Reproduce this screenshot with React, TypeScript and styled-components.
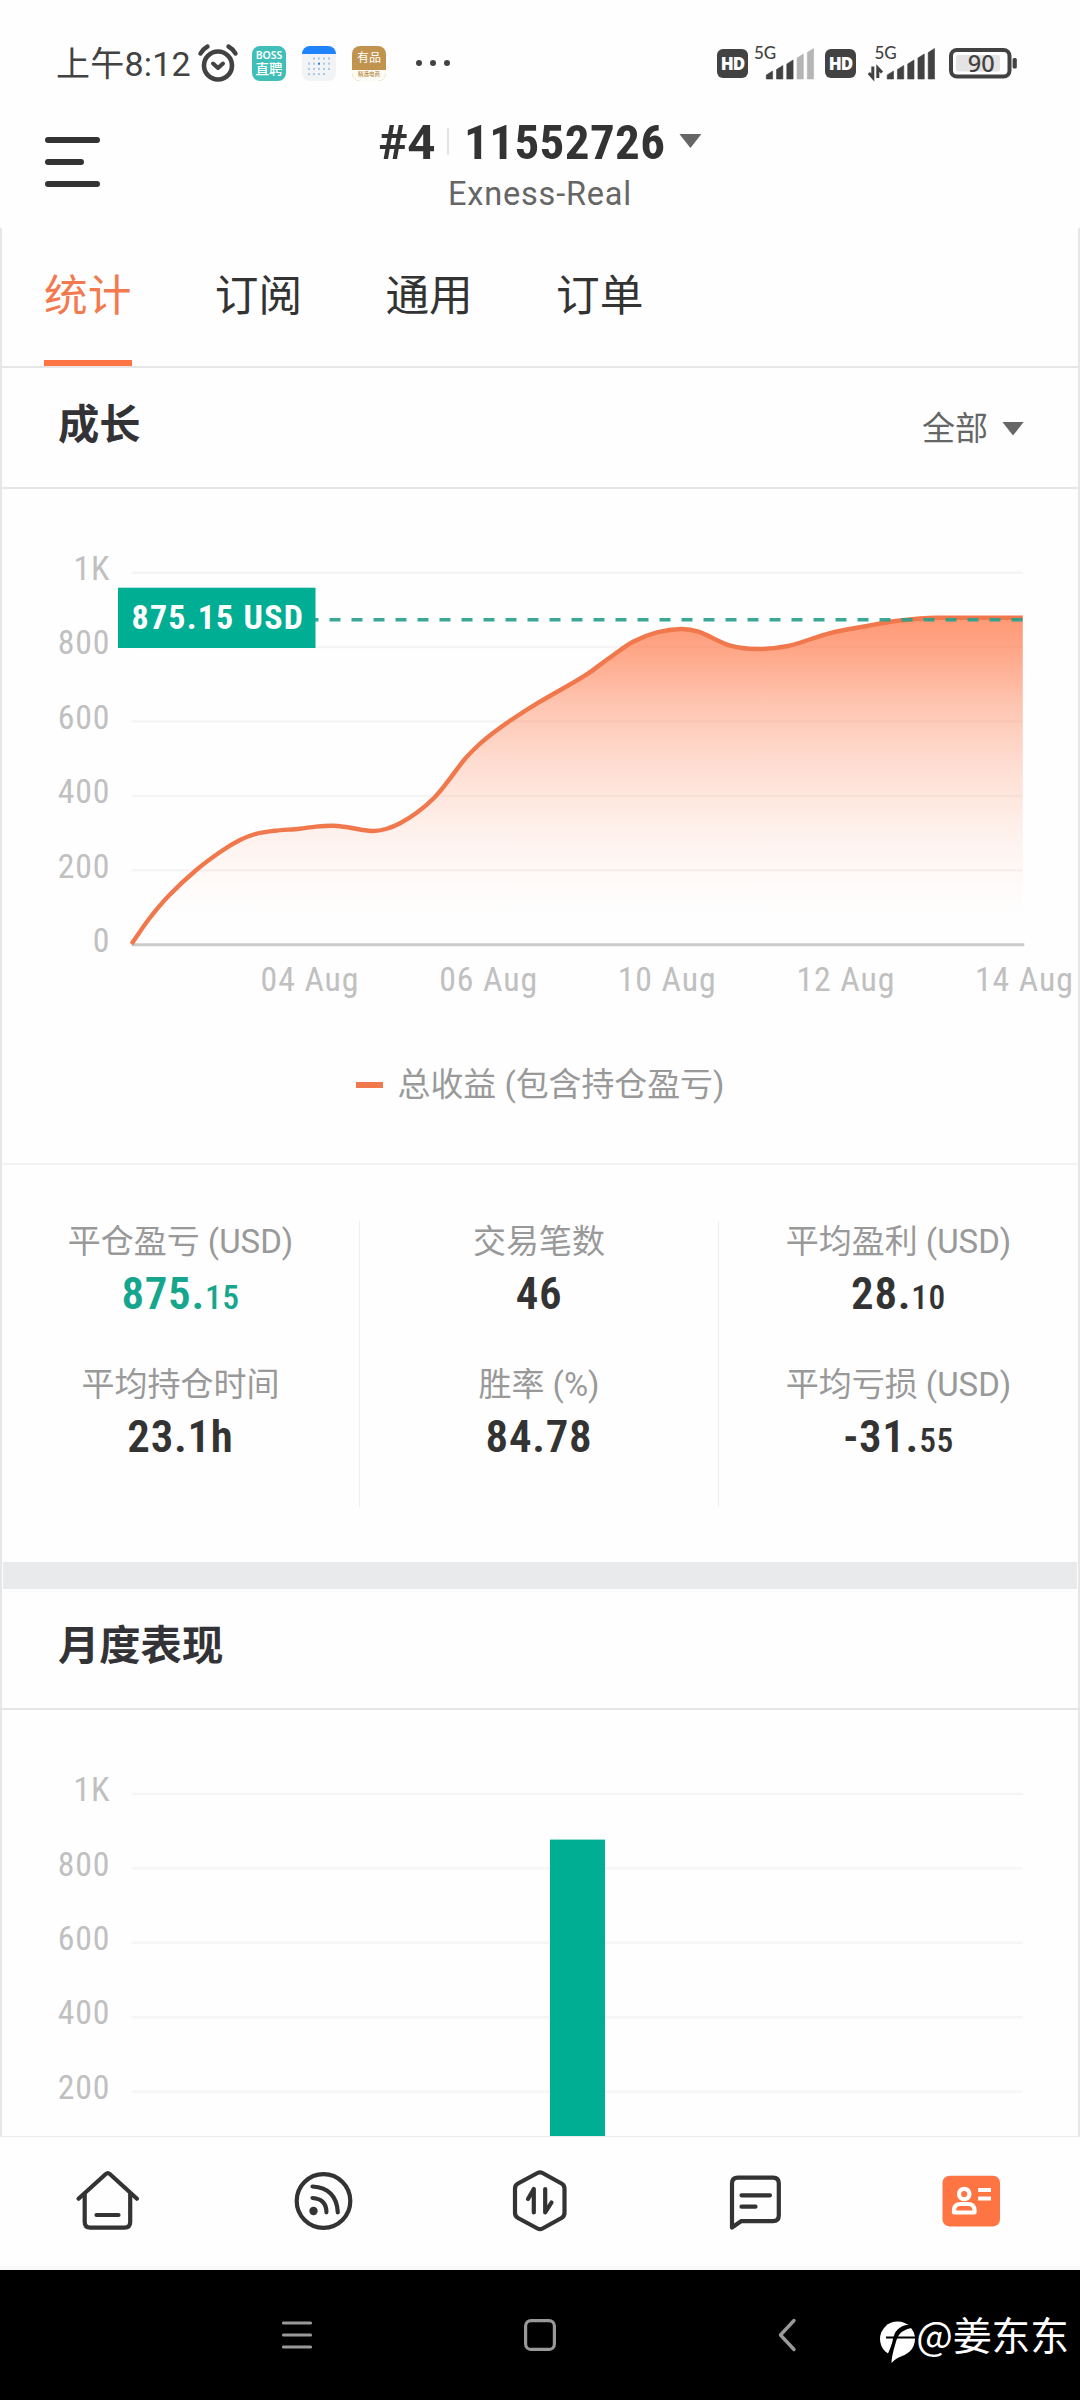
import React from "react";
import styled, { createGlobalStyle, css } from "styled-components";

const FONT = '"Roboto Condensed", Roboto, "Noto Sans CJK SC", sans-serif';
const LABEL_FONT = 'Roboto, "Noto Sans CJK SC", sans-serif';
const INK = "#333333";
const STATUS_INK = "#424242";
const ACCENT = "#ff7443";
const GREEN = "#00ae94";

const GlobalStyle = createGlobalStyle`
  * { box-sizing: border-box; }
  body { margin: 0; background: #fff; }
`;

const Screen = styled.div`
  width: 1080px;
  height: 2400px;
  overflow: hidden;
  display: flex;
  flex-direction: column;
  background: #fefefe;
  color: ${INK};
  font-family: ${FONT};
`;

/* ---------- status bar ---------- */

const StatusBar = styled.div`
  flex: none;
  height: 84px;
  padding: 42px 63px 0 56px;
  display: flex;
  justify-content: space-between;
  color: ${STATUS_INK};
`;

const StatusGroup = styled.div`
  display: flex;
  height: 42px;
  align-items: center;
`;

const Clock = styled.span`
  width: 142px;
  white-space: nowrap;
  font: 400 34px/42px Roboto, "Noto Sans CJK SC", sans-serif;
  letter-spacing: 0.2px;
  padding-top: 1px;
`;

const AppBadge = styled.div<{ $bg: string; $ml: number }>`
  width: 34px;
  height: 35px;
  margin-left: ${(p) => p.$ml}px;
  border-radius: 8px;
  overflow: hidden;
  background: ${(p) => p.$bg};
  color: #fff;
  display: flex;
  flex-direction: column;
  align-items: center;
`;

const BadgeText = styled.span<{ $size: number; $lh: number; $color?: string; $weight?: number }>`
  font: ${(p) => p.$weight ?? 500} ${(p) => p.$size}px/${(p) => p.$lh}px "Noto Sans", "Noto Sans CJK SC", sans-serif;
  color: ${(p) => p.$color ?? "#fff"};
  white-space: nowrap;
`;

const BadgeFoot = styled.div`
  width: 34px;
  flex: 1;
  background: #fdfbf6;
  display: flex;
  justify-content: center;
  overflow: hidden;
`;

const MoreDots = styled.div`
  display: flex;
  gap: 8px;
  margin-left: 30px;
  i {
    width: 6px;
    height: 6px;
    border-radius: 3px;
    background: ${STATUS_INK};
  }
`;

const HdBadge = styled.span<{ $ml?: number }>`
  width: 31px;
  height: 29px;
  margin-left: ${(p) => p.$ml ?? 0}px;
  border-radius: 6px;
  background: ${STATUS_INK};
  color: #fff;
  text-align: center;
  font: 800 17px/29px "Open Sans", sans-serif;
  letter-spacing: -0.9px;
`;

const Drawing = styled.svg<{ $ml?: number; $mt?: number }>`
  display: block;
  flex: none;
  overflow: visible;
  margin-left: ${(p) => p.$ml ?? 0}px;
  margin-top: ${(p) => p.$mt ?? 0}px;
`;

/* ---------- header ---------- */

const Header = styled.header`
  flex: none;
  height: 144px;
  display: grid;
  grid-template-columns: 200px 1fr 200px;
`;

const MenuButton = styled.button`
  width: 55px;
  height: 50px;
  margin: 53px 0 0 45px;
  padding: 0;
  border: 0;
  background: none;
  display: flex;
  flex-direction: column;
  justify-content: space-between;
`;

const MenuLine = styled.span<{ $w: number }>`
  width: ${(p) => p.$w}px;
  height: 6px;
  border-radius: 3px;
  background: ${INK};
`;

const Account = styled.div`
  display: flex;
  flex-direction: column;
  align-items: center;
`;

const AccountLine = styled.div`
  height: 58px;
  margin-top: 30px;
  display: flex;
  align-items: center;
  font-size: 49px;
  line-height: 58px;
  font-weight: 700;
  letter-spacing: 0.4px;
  color: ${INK};
`;

const AccountIndex = styled.span`
  font-family: ${LABEL_FONT};
  letter-spacing: -0.3px;
`;

const Separator = styled.span`
  width: 2px;
  height: 27px;
  margin: 0 15px 4px 12px;
  background: #e4e4e4;
`;

const Server = styled.div`
  margin-top: 2px;
  font-family: ${LABEL_FONT};
  font-size: 32.5px;
  line-height: 40px;
  letter-spacing: 0.8px;
  color: #666;
`;

const Triangle = styled.span<{ $ml: number; $mb?: number }>`
  width: 22px;
  height: 14px;
  margin: 0 0 ${(p) => p.$mb ?? 0}px ${(p) => p.$ml}px;
  background: #666;
  clip-path: polygon(0 0, 100% 0, 50% 100%);
`;

/* ---------- page ---------- */

const Page = styled.main`
  flex: none;
  height: 1908px;
  border: solid #e6e6e6;
  border-width: 0 2px;
  display: flex;
  flex-direction: column;
  overflow: hidden;
`;

const Tabs = styled.nav`
  flex: none;
  height: 140px;
  padding-left: 42px;
  display: flex;
  gap: 82.7px;
  border-bottom: 2px solid #e6e6e6;
`;

const Tab = styled.a<{ $active?: boolean }>`
  width: 88px;
  height: 138px;
  font-size: 43.7px;
  line-height: 137px;
  color: ${INK};
  ${(p) =>
    p.$active &&
    css`
      color: #f37a4e;
      border-bottom: 6px solid ${ACCENT};
    `}
`;

const SectionHead = styled.div`
  flex: none;
  height: 121px;
  padding: 0 54px 5px 56px;
  display: flex;
  align-items: center;
  justify-content: space-between;
  border-bottom: 2px solid #e6e6e6;
`;

const SectionTitle = styled.h2`
  margin: 0;
  font-size: 41.3px;
  line-height: 60px;
  font-weight: 700;
  color: #333337;
`;

const Filter = styled.div`
  display: flex;
  align-items: center;
  margin-top: 7px;
  font-size: 33px;
  line-height: 48px;
  color: #666;
`;

const Legend = styled.div`
  flex: none;
  height: 145px;
  padding-bottom: 21px;
  display: flex;
  align-items: center;
  justify-content: center;
  gap: 15px;
  font-family: ${LABEL_FONT};
  font-size: 32.9px;
  color: #999;
  border-bottom: 2px solid #f3f3f3;
`;

const LegendMark = styled.span`
  width: 27px;
  height: 6px;
  margin-top: 7px;
  background: #f0784c;
`;

const Stats = styled.div`
  flex: none;
  height: 397px;
  padding: 56px 0 55px;
  display: grid;
  grid-template-columns: 358px 359px 359px;
`;

const StatColumn = styled.div`
  display: flex;
  flex-direction: column;
  gap: 34px;
  padding-top: 1px;
  border-right: 1px solid #eeeeee;
  &:last-child {
    border-right: 0;
  }
`;

const Stat = styled.div`
  height: 109px;
  text-align: center;
`;

const StatLabel = styled.div`
  font-family: ${LABEL_FONT};
  font-size: 33px;
  line-height: 40px;
  color: #999;
`;

const StatValue = styled.div<{ $green?: boolean }>`
  margin-top: 5px;
  font-size: 45px;
  line-height: 54px;
  font-weight: 600;
  letter-spacing: 0.7px;
  color: ${(p) => (p.$green ? "#16a68e" : INK)};
  small {
    font-size: 33.5px;
    font-weight: 500;
    letter-spacing: 0.6px;
  }
`;

const Band = styled.div`
  flex: none;
  height: 27px;
  margin: 0 1px;
  background: #e9eaec;
`;

/* ---------- bottom bars ---------- */

const TabBar = styled.nav`
  flex: none;
  height: 134px;
  display: grid;
  grid-template-columns: repeat(5, 1fr);
  align-items: center;
  justify-items: center;
  border-top: 1px solid #ececec;
  border-bottom: 4px solid #f9f9f9;
  padding-top: 2px;
`;

const SystemNav = styled.footer`
  flex: none;
  height: 130px;
  padding: 0 11px 0 281px;
  display: flex;
  align-items: center;
  background: #000;
`;

const Watermark = styled.div`
  margin-left: auto;
  padding-bottom: 5px;
  display: flex;
  align-items: center;
  font: 400 38.7px/56px "Noto Sans CJK SC", sans-serif;
  color: #fff;
`;

/* ---------- charts ---------- */

const PLOT_LEFT = 129.5;
const PLOT_RIGHT = 1020.8;
const STEP = 74.4;
const TICKS = ["1K", "800", "600", "400", "200", "0"];

const AxisText = styled.text`
  font-family: ${FONT};
  font-size: 33.8px;
  font-weight: 400;
  fill: #c0c0c0;
`;

const TagText = styled.text`
  font-family: ${FONT};
  font-size: 34px;
  font-weight: 700;
  fill: #fff;
  letter-spacing: 1.2px;
`;

const POINTS: [number, number][] = [
  [129.5, 455], [147, 430], [167, 406.5], [194.3, 381], [220, 361.8],
  [238, 351], [254, 344.8], [272, 341.8], [297.6, 339.7], [314, 337.6],
  [330, 336.7], [344, 338], [369.9, 342], [384, 340], [398, 334.3],
  [415, 323.5], [432, 309], [445.6, 292.7], [462.9, 270], [476.6, 256],
  [490.4, 244.5], [507.6, 232], [538, 212.7], [582.8, 186.7], [606.9, 169.3],
  [631, 152.7], [655, 143.3], [679.2, 140], [696.4, 142.7], [727.4, 156.3],
  [755, 160], [786, 157], [827.3, 144.3], [865, 137], [896, 131.7],
  [934, 128.7], [1020.8, 128.7],
];

// Smooth line through the points; each inner tangent follows the two neighbours.
function smooth(points: [number, number][]) {
  const last = points.length - 1;
  const slope = (i: number) => {
    if (i >= last - 1) return 0;
    const a = points[Math.max(i - 1, 0)];
    const b = points[i + 1];
    return (b[1] - a[1]) / (b[0] - a[0]);
  };
  let d = `M${points[0][0]} ${points[0][1]}`;
  for (let i = 0; i < last; i++) {
    const b = points[i];
    const c = points[i + 1];
    const run = (c[0] - b[0]) / 3;
    d += `C${b[0] + run} ${b[1] + slope(i) * run} ${c[0] - run} ${c[1] - slope(i + 1) * run} ${c[0]} ${c[1]}`;
  }
  return d;
}

function Grid({ top, count }: { top: number; count: number }) {
  return (
    <>
      {TICKS.slice(0, count).map((label, i) => (
        <g key={label}>
          {label !== "0" && (
            <line x1={PLOT_LEFT} x2={PLOT_RIGHT} y1={top + i * STEP} y2={top + i * STEP} stroke="#000" strokeOpacity={0.035} strokeWidth={2.4} />
          )}
          <AxisText x={108.3} y={top + 7.2 + i * STEP} textAnchor="end" letterSpacing="0.8">{label}</AxisText>
        </g>
      ))}
    </>
  );
}

function GrowthChart() {
  const line = smooth(POINTS);
  const dates = ["04 Aug", "06 Aug", "10 Aug", "12 Aug", "14 Aug"];
  return (
    <Drawing width="1076" height="531" viewBox="0 0 1076 531">
      <defs>
        <linearGradient id="growth" gradientUnits="userSpaceOnUse" x1="0" y1="128" x2="0" y2="455">
          <stop offset="0" stopColor="#ff7443" stopOpacity="0.74" />
          <stop offset="0.13" stopColor="#ff7443" stopOpacity="0.6" />
          <stop offset="0.27" stopColor="#ff7443" stopOpacity="0.41" />
          <stop offset="0.45" stopColor="#ff7443" stopOpacity="0.24" />
          <stop offset="0.65" stopColor="#ff7443" stopOpacity="0.1" />
          <stop offset="0.82" stopColor="#ff7443" stopOpacity="0.025" />
          <stop offset="0.92" stopColor="#ff7443" stopOpacity="0" />
        </linearGradient>
      </defs>
      <Grid top={83.7} count={6} />
      <path d={`${line}V455H${PLOT_LEFT}Z`} fill="url(#growth)" />
      <line x1={PLOT_LEFT} x2="1022.3" y1="455.8" y2="455.8" stroke="#cbcbcb" strokeWidth="3" />
      <path d={line} fill="none" stroke="#f0784c" strokeWidth="4.4" />
      <line x1={PLOT_LEFT} x2={PLOT_RIGHT} y1="130.8" y2="130.8" stroke="#2a9f8b" strokeWidth="3.4" strokeDasharray="11 11" strokeOpacity="0.92" />
      <rect x="116" y="98.7" width="197.5" height="60.3" fill={GREEN} />
      <TagText x="129.500" y="140">875.15 USD</TagText>
      {dates.map((date, i) => (
        <AxisText key={date} x={308 + i * 178.6} y="501.5" textAnchor="middle" letterSpacing="0.9">{date}</AxisText>
      ))}
    </Drawing>
  );
}

function MonthlyChart() {
  return (
    <Drawing width="1076" height="426" viewBox="0 0 1076 426">
      <Grid top={84} count={5} />
      <rect x="548" y="129.6" width="55" height="300" fill={GREEN} />
    </Drawing>
  );
}

/* ---------- small drawings ---------- */

const AlarmIcon = () => (
  <Drawing width="40" height="40" viewBox="0 0 40 40" fill="none" stroke={STATUS_INK} strokeLinecap="round">
    <circle cx="20" cy="22.5" r="14" strokeWidth="4.6" />
    <path d="M15 20.5l5 4.5 5-4.5" strokeWidth="4" strokeLinejoin="round" />
    <path d="M2.500 10.500Q5 6 9.500 3.500M37.500 10.500Q35 6 30.500 3.500" strokeWidth="4.400" />
  </Drawing>
);

const CalendarIcon = () => (
  <Drawing $ml={16} width="34" height="35" viewBox="0 0 34 35">
    <defs>
      <clipPath id="cal"><rect width="34" height="35" rx="8" /></clipPath>
    </defs>
    <g clipPath="url(#cal)">
      <rect width="34" height="35" fill="#f1f3f5" />
      <rect width="34" height="8" fill="#1f84fb" />
      {[0, 1, 2, 3].map((r) =>
        [0, 1, 2, 3, 4].map((c) =>
          (r === 0 && c === 0) || (r === 3 && c === 4) ? null : (
            <rect key={`${r}${c}`} x={6 + c * 5} y={11.500 + r * 5.2} width="2" height="2" fill={r === 1 && c === 2 ? "#2a7fd8" : "#a9c8e8"} />
          )
        )
      )}
    </g>
  </Drawing>
);

function Signal({ strong, data, ml }: { strong: number; data?: boolean; ml: number }) {
  const heights = [8, 13.5, 19, 25, 30.5];
  return (
    <Drawing $ml={ml} width={data ? 68 : 62} height="36" viewBox={data ? "0 0 68 36" : "0 0 62 36"}>
      <text x={data ? 6.5 : 0} y="13.5" fontFamily="Lato, sans-serif" fontSize="17" fontWeight="500" fill={STATUS_INK}>5G</text>
      {data && <path d="M4.800 21.500V32.500L.8 28M9.800 33V23l4.200 4.500" fill="none" stroke={STATUS_INK} strokeWidth="3" />}
      {heights.map((h, i) => {
        const x = (data ? 19.2 : 12.3) + i * 10.25;
        const color = i < strong ? STATUS_INK : "#b5b5b5";
        return <path key={h} d={`M${x} 34v${-(h - 4)}l6.300-4v${h}z`} fill={color} stroke={color} strokeWidth="0.6" strokeLinejoin="round" />;
      })}
    </Drawing>
  );
}

const BatteryIcon = () => (
  <Drawing $ml={12} width="69" height="32" viewBox="0 0 69 32">
    <rect x="3" y="3" width="58.500" height="26.500" rx="6" fill="none" stroke={STATUS_INK} strokeWidth="4" />
    <rect x="8" y="8" width="44" height="16.500" rx="2" fill="#e4e4e4" />
    <rect x="64.600" y="11" width="4.200" height="10.500" rx="1.500" fill={STATUS_INK} />
    <text x="33.200" y="24.500" textAnchor="middle" fontFamily="'Noto Sans', sans-serif" fontSize="23.500" fontWeight="500" fill={STATUS_INK}>90</text>
  </Drawing>
);

const BarIcon = ({ children }: { children: React.ReactNode }) => (
  <Drawing width="72" height="72" viewBox="0 0 72 72" fill="none" stroke={INK} strokeWidth="4.200" strokeLinecap="round" strokeLinejoin="round">
    {children}
  </Drawing>
);

type StatItem = { label: string; main: string; minor?: string; green?: boolean };

const stats: StatItem[][] = [
  [
    { label: "平仓盈亏 (USD)", main: "875.", minor: "15", green: true },
    { label: "平均持仓时间", main: "23.1h" },
  ],
  [
    { label: "交易笔数", main: "46" },
    { label: "胜率 (%)", main: "84.78" },
  ],
  [
    { label: "平均盈利 (USD)", main: "28.", minor: "10" },
    { label: "平均亏损 (USD)", main: "-31.", minor: "55" },
  ],
];

export default function App() {
  return (
    <Screen>
      <GlobalStyle />
      <StatusBar>
        <StatusGroup>
          <Clock>上午8:12</Clock>
          <AlarmIcon />
          <AppBadge $bg="#3fbfb8" $ml={14}>
            <BadgeText $size={10.5} $lh={19} $weight={600}>BOSS</BadgeText>
            <BadgeText $size={13.5} $lh={9} $weight={500}>直聘</BadgeText>
          </AppBadge>
          <CalendarIcon />
          <AppBadge $bg="#c0944f" $ml={16}>
            <BadgeText $size={12} $lh={24} $weight={400}>有品</BadgeText>
            <BadgeFoot>
              <BadgeText $size={5.5} $lh={9} $color="#b98c45">精选电商</BadgeText>
            </BadgeFoot>
          </AppBadge>
          <MoreDots><i /><i /><i /></MoreDots>
        </StatusGroup>
        <StatusGroup>
          <HdBadge>HD</HdBadge>
          <Signal strong={3} ml={6} />
          <HdBadge $ml={9}>HD</HdBadge>
          <Signal strong={5} data ml={12} />
          <BatteryIcon />
        </StatusGroup>
      </StatusBar>

      <Header>
        <MenuButton aria-label="menu">
          <MenuLine $w={55} />
          <MenuLine $w={39} />
          <MenuLine $w={55} />
        </MenuButton>
        <Account>
          <AccountLine>
            <AccountIndex>#4</AccountIndex>
            <Separator />
            11552726
            <Triangle $ml={14} $mb={4} />
          </AccountLine>
          <Server>Exness-Real</Server>
        </Account>
      </Header>

      <Page>
        <Tabs>
          <Tab $active>统计</Tab>
          <Tab>订阅</Tab>
          <Tab>通用</Tab>
          <Tab>订单</Tab>
        </Tabs>
        <SectionHead>
          <SectionTitle>成长</SectionTitle>
          <Filter>
            全部
            <Triangle $ml={14} />
          </Filter>
        </SectionHead>
        <GrowthChart />
        <Legend>
          <LegendMark />
          总收益 (包含持仓盈亏)
        </Legend>
        <Stats>
          {stats.map((column, i) => (
            <StatColumn key={i}>
              {column.map((s) => (
                <Stat key={s.label}>
                  <StatLabel>{s.label}</StatLabel>
                  <StatValue $green={s.green}>
                    {s.main}
                    {s.minor && <small>{s.minor}</small>}
                  </StatValue>
                </Stat>
              ))}
            </StatColumn>
          ))}
        </Stats>
        <Band />
        <SectionHead>
          <SectionTitle>月度表现</SectionTitle>
        </SectionHead>
        <MonthlyChart />
      </Page>

      <TabBar>
        <BarIcon>
          <path d="M6.500 31.700L33.800 7q2-1.800 4 0L65 31.700" />
          <path d="M12.700 27V55q0 5.700 5.700 5.700H52.500q5.700 0 5.700-5.700V27M24.500 48H46.500" />
        </BarIcon>
        <BarIcon>
          <circle cx="35.500" cy="34" r="26.800" />
          <circle cx="25.500" cy="44" r="4.200" fill={INK} stroke="none" />
          <path d="M24.500 31Q38.400 32 38.400 45.300M24.500 19.500Q48.500 21 49.800 45.300" />
        </BarIcon>
        <BarIcon>
          <path d="M33.500 6q2.500-1.300 5 0L57.500 16.500q3 1.700 3 5V46q0 3.300-3 5L38.500 61.500q-2.500 1.300-5 0L14 51q-3-1.700-3-5V21.500q0-3.300 3-5Z" />
          <path d="M24 32L29.800 22V45.500M41.200 22V45.500L47.500 35.500" />
        </BarIcon>
        <BarIcon>
          <path d="M12 60.500V16.500q0-5.800 5.800-5.800H53q5.800 0 5.800 5.800V48.500q0 5.700-5.800 5.700H21Z" />
          <path d="M21.500 28.300H50M21.500 39.700H35.500" />
        </BarIcon>
        <BarIcon>
          <rect x="6.500" y="8.700" width="57.500" height="50.700" rx="7" fill={ACCENT} stroke="none" />
          <g stroke="#fff">
            <circle cx="28.200" cy="27" r="5.200" />
            <path d="M18 45.500V43.500q0-6.500 6.500-6.500H32q6.500 0 6.500 6.500V45.500Z" />
            <path d="M42.200 23H55M42.200 31.500H55" strokeLinecap="butt" />
          </g>
        </BarIcon>
      </TabBar>

      <SystemNav>
        <Drawing width="32" height="32" viewBox="0 0 32 32" stroke="#999" strokeWidth="3.200" strokeLinecap="round">
          <path d="M2.500 4H29.500M2.500 16H29.500M2.500 28H29.500" />
        </Drawing>
        <Drawing $ml={210} width="34" height="34" viewBox="0 0 34 34" fill="none" stroke="#999" strokeWidth="3.200">
          <rect x="2.600" y="2.600" width="28.800" height="28.800" rx="5.500" />
        </Drawing>
        <Drawing $ml={220} width="20" height="34" viewBox="0 0 20 34" fill="none" stroke="#999" strokeWidth="3.400" strokeLinecap="round" strokeLinejoin="round">
          <path d="M17 2.500L3.500 17L17 31.500" />
        </Drawing>
        <Watermark>
          <Drawing $mt={18} width="36" height="42" viewBox="0 0 36 42">
            <circle cx="17.500" cy="18" r="17.500" fill="#fff" />
            <path d="M12 28L11.500 42Q16 37 22 35Z" fill="#fff" />
            <path d="M33 3.500Q17 3 13.500 16Q11 28 6 36L11.500 38.500Q13 30 16.500 19Q19 9 33 6.500Z" fill="#000" />
            <path d="M6 16.500H36" stroke="#000" strokeWidth="2" />
          </Drawing>
          @姜东东
        </Watermark>
      </SystemNav>
    </Screen>
  );
}
